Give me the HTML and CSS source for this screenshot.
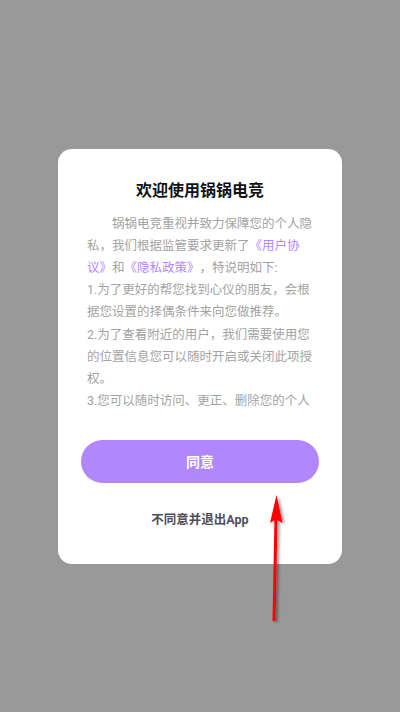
FILE: index.html
```html
<!DOCTYPE html>
<html lang="zh-CN">
<head>
  <meta charset="UTF-8" />
  <meta name="viewport" content="width=device-width, initial-scale=1.0"/>
  <title>欢迎使用锅锅电竞</title>
  <link rel="stylesheet" href="styles.css">
</head>
<body>

  <div class="overlay">
    <!-- Privacy dialog -->
    <div class="dialog">
      <div class="dialog__title">欢迎使用锅锅电竞</div>
      <div class="dialog__body">
        <p class="dialog__intro">锅锅电竞重视并致力保障您的个人隐私，我们根据监管要求更新了<span class="link">《用户协议》</span>和<span class="link">《隐私政策》</span>，特说明如下:</p>
        <p>1.为了更好的帮您找到心仪的朋友，会根据您设置的择偶条件来向您做推荐。</p>
        <p>2.为了查看附近的用户，我们需要使用您的位置信息您可以随时开启或关闭此项授权。</p>
        <p>3.您可以随时访问、更正、删除您的个人</p>
      </div>
      <button class="dialog__agree">同意</button>
      <div class="dialog__decline">不同意并退出App</div>
    </div>
  </div>

  <!-- annotation arrow -->
  <svg class="arrow" width="400" height="712" viewBox="0 0 400 712">
    <defs>
      <filter id="shadow" x="-50%" y="-10%" width="200%" height="120%">
        <feDropShadow dx="2" dy="1" stdDeviation="1.5" flood-color="#000" flood-opacity="0.45"/>
      </filter>
    </defs>
    <g filter="url(#shadow)">
      <line x1="274" y1="621" x2="276" y2="518" stroke="#ff0000" stroke-width="3"/>
      <polygon points="276.5,495 282.5,523 276,519 270,523" fill="#ff0000"/>
    </g>
  </svg>

</body>
</html>
```

FILE: styles.css
```css
* {
  box-sizing: border-box;
  margin: 0;
  padding: 0;
}

html, body {
  height: 100%;
}

body {
  font-family: Roboto, "Noto Sans CJK SC", sans-serif;
  background-color: #999999;
}

.overlay {
  height: 712px;
  display: flex;
  align-items: center;
  justify-content: center;
}

.dialog {
  width: 284px;
  background-color: #ffffff;
  border-radius: 14px;
  padding: 31px 23px 34px;
  display: flex;
  flex-direction: column;
}

.dialog__title {
  font-size: 16px;
  line-height: 22px;
  font-weight: bold;
  color: #111111;
  text-align: center;
}

.dialog__body {
  margin-top: 11px;
  height: 200px;
  overflow: hidden;
  padding: 0 6px;
  font-size: 12.5px;
  line-height: 22.2px;
  color: #a3a3a3;
  text-spacing-trim: space-all;
}

.dialog__intro {
  text-indent: 2em;
}

.link {
  color: #b388ff;
}

.dialog__agree {
  margin-top: 27px;
  height: 43px;
  border: none;
  border-radius: 22px;
  background-color: #b286fd;
  color: #ffffff;
  font-family: inherit;
  font-size: 14px;
  font-weight: bold;
}

.dialog__decline {
  margin-top: 27px;
  line-height: 20px;
  font-size: 12.5px;
  font-weight: bold;
  color: #4f4f5c;
  text-align: center;
}

.arrow {
  position: absolute;
  left: 0;
  top: 0;
  pointer-events: none;
}
```
